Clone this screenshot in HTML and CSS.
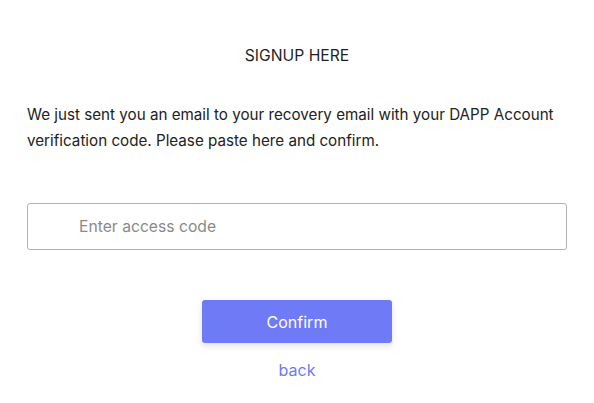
FILE: index.html
```html
<!DOCTYPE html>
<html lang="en">
<head>
<meta charset="utf-8">
<title>Signup</title>
<link rel="stylesheet" href="styles.css">
</head>
<body>
<main class="page">
  <h1 class="title">SIGNUP HERE</h1>
  <p class="message">We just sent you an email to your recovery email with your DAPP Account verification code. Please paste here and confirm.</p>
  <input class="code-input" type="text" placeholder="Enter access code">
  <div class="actions">
    <button class="confirm" type="button">Confirm</button>
    <a class="back" href="#">back</a>
  </div>
</main>
</body>
</html>
```

FILE: styles.css
```css
* { box-sizing: border-box; }
html, body { margin: 0; padding: 0; background: #fff; }
body {
  font-family: Inter, "Noto Sans", sans-serif;
  color: #222;
}
.page {
  padding: 46px 27px 0;
  display: flex;
  flex-direction: column;
}
.title {
  margin: 0;
  text-align: center;
  font-size: 15.7px;
  font-weight: 400;
  line-height: 20px;
  color: #1f1f1f;
}
.message {
  margin: 36px 0 0;
  font-size: 15.2px;
  line-height: 26px;
  color: #222;
}
.code-input {
  margin-top: 49px;
  width: 100%;
  height: 47px;
  border: 1px solid #b3b3b3;
  border-radius: 3px;
  padding: 0 0 0 51px;
  font-family: inherit;
  font-size: 15.7px;
  color: #222;
  outline: none;
}
.code-input::placeholder { color: #8a8a8a; }
.actions {
  margin-top: 50px;
  display: flex;
  flex-direction: column;
  align-items: center;
}
.confirm {
  width: 190px;
  height: 43px;
  border: none;
  border-radius: 3px;
  background: #6f7af7;
  color: #fff;
  font-family: inherit;
  font-size: 16px;
  box-shadow: 0 3px 6px rgba(0,0,0,0.12);
}
.back {
  margin-top: 17px;
  font-size: 16px;
  line-height: 20px;
  color: #6f7af7;
  text-decoration: none;
}
```
